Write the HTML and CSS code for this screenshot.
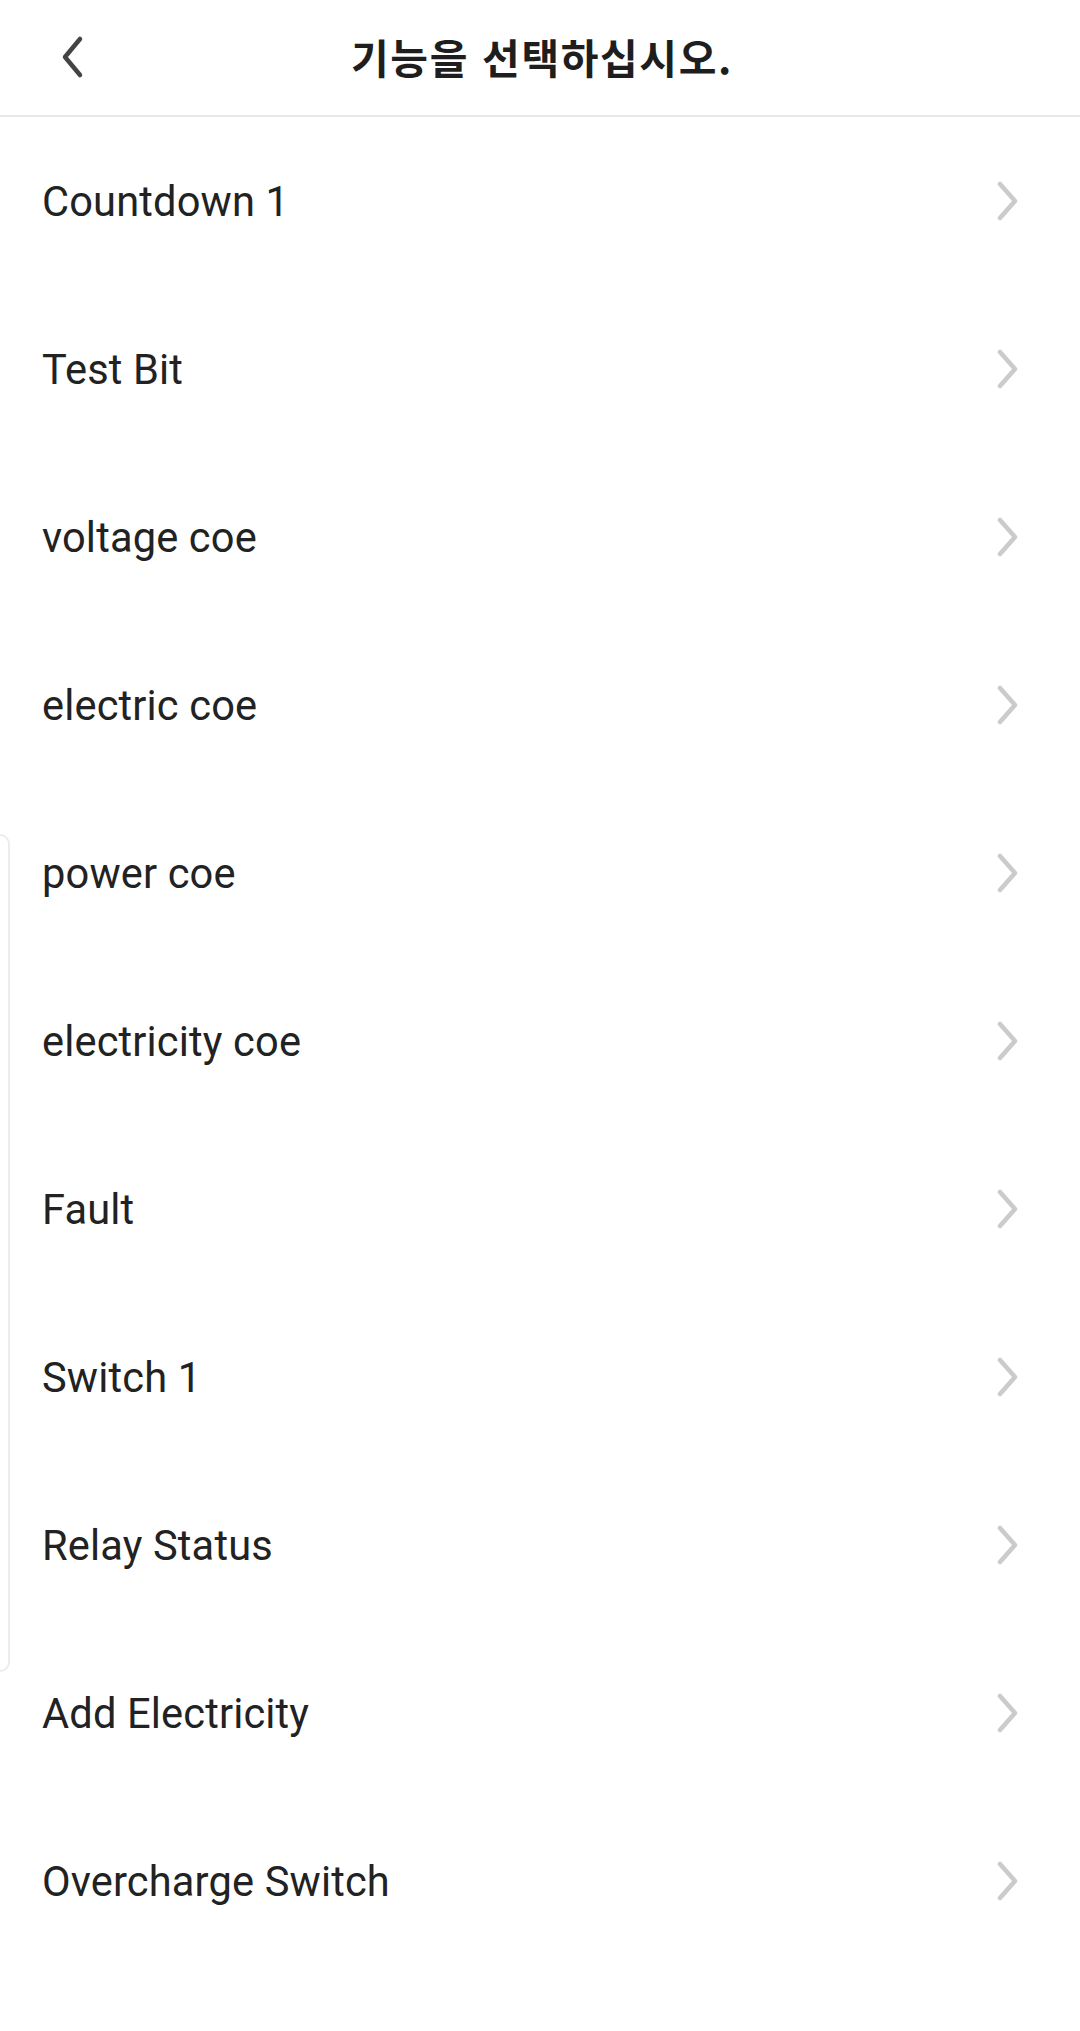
FILE: index.html
```html
<!DOCTYPE html>
<html lang="ko">
<head>
<meta charset="utf-8">
<link rel="stylesheet" href="styles.css">
</head>
<body>
<div class="page">
  <header class="header">
    <button class="back" aria-label="back">
      <svg width="30" height="44" viewBox="0 0 30 44"><path d="M22 4 L7 22 L22 40" fill="none" stroke="#444" stroke-width="4.5" stroke-linecap="round" stroke-linejoin="round"/></svg>
    </button>
    <h1 class="title">기능을 선택하십시오.</h1>
  </header>
  <ul class="list">
    <li class="row"><span class="label">Countdown 1</span><svg class="chev" width="30" height="44" viewBox="0 0 30 44"><path d="M6 5 L21 22 L6 39" fill="none" stroke="#cbcbcb" stroke-width="4.5" stroke-linecap="round" stroke-linejoin="round"/></svg></li>
    <li class="row"><span class="label">Test Bit</span><svg class="chev" width="30" height="44" viewBox="0 0 30 44"><path d="M6 5 L21 22 L6 39" fill="none" stroke="#cbcbcb" stroke-width="4.5" stroke-linecap="round" stroke-linejoin="round"/></svg></li>
    <li class="row"><span class="label">voltage coe</span><svg class="chev" width="30" height="44" viewBox="0 0 30 44"><path d="M6 5 L21 22 L6 39" fill="none" stroke="#cbcbcb" stroke-width="4.5" stroke-linecap="round" stroke-linejoin="round"/></svg></li>
    <li class="row"><span class="label">electric coe</span><svg class="chev" width="30" height="44" viewBox="0 0 30 44"><path d="M6 5 L21 22 L6 39" fill="none" stroke="#cbcbcb" stroke-width="4.5" stroke-linecap="round" stroke-linejoin="round"/></svg></li>
    <li class="row"><span class="label">power coe</span><svg class="chev" width="30" height="44" viewBox="0 0 30 44"><path d="M6 5 L21 22 L6 39" fill="none" stroke="#cbcbcb" stroke-width="4.5" stroke-linecap="round" stroke-linejoin="round"/></svg></li>
    <li class="row"><span class="label">electricity coe</span><svg class="chev" width="30" height="44" viewBox="0 0 30 44"><path d="M6 5 L21 22 L6 39" fill="none" stroke="#cbcbcb" stroke-width="4.5" stroke-linecap="round" stroke-linejoin="round"/></svg></li>
    <li class="row"><span class="label">Fault</span><svg class="chev" width="30" height="44" viewBox="0 0 30 44"><path d="M6 5 L21 22 L6 39" fill="none" stroke="#cbcbcb" stroke-width="4.5" stroke-linecap="round" stroke-linejoin="round"/></svg></li>
    <li class="row"><span class="label">Switch 1</span><svg class="chev" width="30" height="44" viewBox="0 0 30 44"><path d="M6 5 L21 22 L6 39" fill="none" stroke="#cbcbcb" stroke-width="4.5" stroke-linecap="round" stroke-linejoin="round"/></svg></li>
    <li class="row"><span class="label">Relay Status</span><svg class="chev" width="30" height="44" viewBox="0 0 30 44"><path d="M6 5 L21 22 L6 39" fill="none" stroke="#cbcbcb" stroke-width="4.5" stroke-linecap="round" stroke-linejoin="round"/></svg></li>
    <li class="row"><span class="label">Add Electricity</span><svg class="chev" width="30" height="44" viewBox="0 0 30 44"><path d="M6 5 L21 22 L6 39" fill="none" stroke="#cbcbcb" stroke-width="4.5" stroke-linecap="round" stroke-linejoin="round"/></svg></li>
    <li class="row"><span class="label">Overcharge Switch</span><svg class="chev" width="30" height="44" viewBox="0 0 30 44"><path d="M6 5 L21 22 L6 39" fill="none" stroke="#cbcbcb" stroke-width="4.5" stroke-linecap="round" stroke-linejoin="round"/></svg></li>
  </ul>
  <div class="edge"></div>
</div>
</body>
</html>
```

FILE: styles.css
```css
* { box-sizing: border-box; }
html, body { margin: 0; padding: 0; background: #fff; }
body { font-family: Roboto, "Noto Sans CJK KR", sans-serif; color: #222; }
.page { position: relative; width: 1080px; min-height: 2031px; overflow: hidden; }
.header {
  position: relative;
  height: 117px;
  display: flex;
  align-items: center;
  justify-content: center;
  border-bottom: 2px solid #e8e8e8;
}
.back {
  position: absolute;
  left: 58px;
  top: 35px;
  border: 0;
  background: none;
  padding: 0;
  width: 30px;
  height: 44px;
}
.back svg { display: block; }
.title {
  margin: 0;
  font-family: "Noto Sans CJK KR", sans-serif;
  font-weight: 700;
  font-size: 41px;
  letter-spacing: 1.6px;
  color: #1e1e1e;
  padding-bottom: 4px;
  padding-left: 4px;
}
.list { list-style: none; margin: 0; padding: 0; }
.row {
  height: 168px;
  display: flex;
  align-items: center;
  justify-content: space-between;
  padding: 0 56px 0 42px;
}
.label { font-size: 41.6px; color: #222; letter-spacing: 0.15px; }
.chev { display: block; }
.edge {
  position: absolute;
  left: -30px;
  top: 834px;
  width: 40px;
  height: 838px;
  border: 2px solid #ececec;
  border-radius: 10px;
}
```
